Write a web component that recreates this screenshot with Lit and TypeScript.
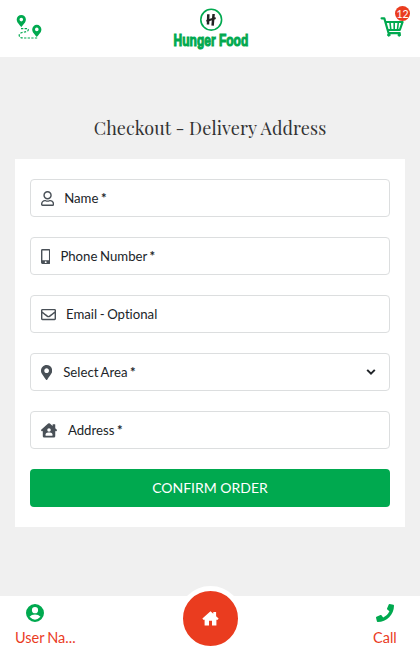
import { LitElement, html, css, svg } from "lit";
import { customElement } from "lit/decorators.js";

const userIcon = svg`<path d="M313.6 304c-28.7 0-42.5 16-89.6 16-47.1 0-60.8-16-89.6-16C60.2 304 0 364.2 0 438.4V464c0 26.5 21.5 48 48 48h352c26.5 0 48-21.5 48-48v-25.6c0-74.2-60.2-134.4-134.4-134.4zM400 464H48v-25.6c0-47.6 38.8-86.4 86.4-86.4 14.6 0 38.3 16 89.6 16 51.7 0 74.9-16 89.6-16 47.6 0 86.4 38.8 86.4 86.4V464zM224 288c79.5 0 144-64.5 144-144S303.5 0 224 0 80 64.5 80 144s64.5 144 144 144zm0-240c52.9 0 96 43.1 96 96s-43.1 96-96 96-96-43.1-96-96 43.1-96 96-96z"/>`;
const mobileIcon = svg`<path fill-rule="evenodd" d="M48 0h224a48 48 0 0 1 48 48v416a48 48 0 0 1-48 48H48a48 48 0 0 1-48-48V48A48 48 0 0 1 48 0zM48 48v336h224V48zM160 416a32 32 0 1 0 0 64 32 32 0 0 0 0-64z"/>`;
const mailIcon = svg`<path fill-rule="evenodd" d="M464 64H48C21.5 64 0 85.500 0 112v288c0 26.500 21.500 48 48 48h416c26.500 0 48-21.500 48-48V112c0-26.500-21.500-48-48-48zm0 48v40.800c-22.400 18.300-58.200 46.700-134.600 106.500-16.800 13.200-50.200 45.100-73.400 44.700-23.200.400-56.600-31.500-73.400-44.700C106.200 199.500 70.400 171.100 48 152.800V112h416zM48 400V214.400c22.900 18.300 55.400 43.900 104.900 82.600 21.900 17.200 60.100 55.200 103.100 55 42.700.200 80.500-37.200 103.100-54.900 49.500-38.800 82-64.400 104.900-82.700V400H48z"/>`;
const pinIcon = svg`<path d="M172.268 501.67C26.97 291.031 0 269.413 0 192 0 85.961 85.961 0 192 0s192 85.961 192 192c0 77.413-26.97 99.031-172.268 309.67-9.535 13.774-29.93 13.773-39.464 0zM192 272c44.183 0 80-35.817 80-80s-35.817-80-80-80-80 35.817-80 80 35.817 80 80 80z"/>`;
const houseUserIcon = svg`<path transform="translate(0 8) scale(.95)" fill-rule="evenodd" d="M570 236 512 184V48a16 16 0 0 0-16-16h-64a16 16 0 0 0-16 16v51l-96-86a48 48 0 0 0-64 0L6 236a18 18 0 0 0-1 25l20 23a18 18 0 0 0 25 1l14-12v191a48 48 0 0 0 48 48h352a48 48 0 0 0 48-48V273l14 12a18 18 0 0 0 25-1l20-23a18 18 0 0 0-1-25zM288 176a64 64 0 1 1 0 128 64 64 0 0 1 0-128zM400 448H176a16 16 0 0 1-16-16 96 96 0 0 1 96-96h64a96 96 0 0 1 96 96 16 16 0 0 1-16 16z"/>`;

const fields = [
  { icon: userIcon, w: 448, label: "Name", mark: true },
  { icon: mobileIcon, w: 320, label: "Phone Number", mark: true },
  { icon: mailIcon, w: 512, label: "Email - Optional" },
  { icon: pinIcon, w: 384, label: "Select Area", mark: true, select: true },
  { icon: houseUserIcon, w: 576, label: "Address", mark: true },
];

@customElement("app-root")
export class AppRoot extends LitElement {
  static styles = css`
    :host {
      display: flex;
      flex-direction: column;
      height: 654px;
      background: #f0f0f0;
      font-family: Lato, sans-serif;
      font-size: 14px;
      color: #212529;
      font-variant-ligatures: none;
    }
    * { box-sizing: border-box; }
    svg { display: block; flex: none; }
    .top {
      height: 57px;
      background: #fff;
      display: grid;
      grid-template-columns: 1fr auto 1fr;
      align-items: start;
      padding: 0 9px 0 15px;
    }
    .route { margin-top: 14px; }
    .logo { margin: 6px 0 0 -6px; }
    .cart { justify-self: end; margin-top: 5px; position: relative; }
    .cart svg { margin: 11px 7px 0 0; }
    .badge {
      position: absolute;
      top: 1px;
      right: 1px;
      width: 15px;
      height: 15px;
      border-radius: 50%;
      background: #ea3c1f;
      color: #fff;
      font-size: 10.5px;
      line-height: 16px;
      text-align: center;
    }
    main { flex: 1; padding: 57px 15px 0; }
    h1 {
      margin: 0;
      height: 45px;
      line-height: 28px;
      font-family: "Playfair Display", "Liberation Serif", serif;
      font-size: 18px;
      font-weight: 400;
      text-align: center;
      white-space: nowrap;
      letter-spacing: 0.08px;
      color: #333;
    }
    .card {
      background: #fff;
      padding: 20px 15px;
      display: flex;
      flex-direction: column;
      gap: 20px;
    }
    .field {
      height: 38px;
      border: 1px solid #dcdedf;
      border-radius: 4px;
      padding: 0 13px 0 10px;
      display: flex;
      align-items: center;
      gap: 10px;
    }
    .field svg { fill: #495057; }
    .label { flex: 1; font-size: 13.2px; word-spacing: -0.8px; }
    .mark { font-weight: 700; }
    .pick { margin-left: 1px; }
    .submit {
      height: 38px;
      border: 0;
      border-radius: 4px;
      background: #00a94f;
      color: #fff;
      font: 14px Lato, sans-serif;
      padding: 0 0 2px;
    }
    .bottom {
      height: 58px;
      background: #fff;
      display: flex;
      justify-content: space-between;
      padding: 0 15px;
      position: relative;
    }
    .tab { width: 60px; color: #ea3c1f; font-size: 14.5px; word-spacing: -0.7px; }
    .tab svg { margin: 8px 0 0 11px; fill: #00a94f; }
    .tab span { display: block; line-height: 18px; margin-top: 7px; white-space: nowrap; }
    .tab.call { width: 32px; }
    .call svg { margin-left: 3px; }
    .home {
      position: absolute;
      left: 178px;
      top: -10px;
      width: 65px;
      height: 65px;
      border: 5px solid #fff;
      border-radius: 50%;
      background: #ea3c1f;
      display: grid;
      place-items: center;
    }
  `;

  render() {
    return html`
      <header class="top">
        <svg class="route" width="28" height="27" viewBox="0 0 28 27">
          <g fill="#00a94f" fill-rule="evenodd">
            <path d="M6.300 1a4.600 4.600 0 0 1 4.600 4.600C10.900 8.600 7.800 11 6.300 13.200 4.800 11 1.700 8.600 1.700 5.600A4.600 4.600 0 0 1 6.300 1zm0 2.800a1.800 1.800 0 1 0 0 3.600 1.800 1.800 0 0 0 0-3.600z"/>
            <path d="M21.800 10.800a4.600 4.600 0 0 1 4.600 4.600c0 3-3.100 5.400-4.600 7.600-1.500-2.200-4.600-4.600-4.600-7.600a4.600 4.600 0 0 1 4.600-4.600zm0 2.800a1.800 1.800 0 1 0 0 3.600 1.800 1.800 0 0 0 0-3.600z"/>
          </g>
          <path d="M6 14.600h5.500q2.500.3 1.500 2.100c-1.200 1.700-8.500 1-8.800 4.400-.1 2.200 2 2.900 4.300 2.900H23" fill="none" stroke="#00a94f" stroke-width="1.200" stroke-dasharray="2.300 1.300"/>
        </svg>
        <svg class="logo" width="78" height="44" viewBox="0 0 78 44">
          <circle cx="40.200" cy="13.700" r="10.400" fill="none" stroke="#00a94f" stroke-width="1.600"/>
          <path d="M37.300 8.200 37 18.500M42.600 8 41.600 19.600" fill="none" stroke="#222" stroke-width="2.500"/>
          <path d="M35.500 15 44.600 12" fill="none" stroke="#222" stroke-width="2"/>
          <text transform="translate(2.600 39.700) scale(1 1.380)" font-family="Liberation Sans, sans-serif" font-size="12" font-weight="700" fill="#00a94f" stroke="#00a94f" stroke-width=".8">Hunger Food</text>
        </svg>
        <div class="cart">
          <svg width="24" height="22" viewBox="0 0 24 22" fill="none" stroke="#00a94f" stroke-width="2.200" stroke-linecap="round" stroke-linejoin="round">
            <path d="M1.600 2.300H4.300L8.600 17.200H19.800M5.600 6H22.600L19.800 14H7.700"/>
            <path d="M10 6.500l.8 7M14.200 6.500V14M18.300 6.500l-.8 7" stroke-width="1.600"/>
            <circle cx="8.800" cy="19" r="1.200" fill="#00a94f" stroke-width="1"/>
            <circle cx="19.200" cy="19" r="1.200" fill="#00a94f" stroke-width="1"/>
          </svg>
          <span class="badge">12</span>
        </div>
      </header>
      <main>
        <h1>Checkout - Delivery Address</h1>
        <section class="card">
          ${fields.map(
            (f) => html`<div class="field">
              <svg width=${(f.w / 512) * 15} height="15" viewBox="0 0 ${f.w} 512">${f.icon}</svg>
              <span class="label ${f.select ? "pick" : ""}">${f.label}${f.mark ? html` <span class="mark">*</span>` : null}</span>
              ${f.select
                ? html`<svg width="10" height="8" viewBox="0 0 10 8"><path d="M1.200 1.900 5 5.700l3.800-3.800" fill="none" stroke="#212529" stroke-width="2"/></svg>`
                : null}
            </div>`
          )}
          <button class="submit">CONFIRM ORDER</button>
        </section>
      </main>
      <nav class="bottom">
        <div class="tab">
          <svg width="18" height="18" viewBox="0 0 18 18"><path fill-rule="evenodd" d="M9 0a9 9 0 1 1 0 18A9 9 0 0 1 9 0zm0 3.100a3.100 3.100 0 1 0 0 6.200 3.100 3.100 0 0 0 0-6.200zM3.500 12.800Q9 18.500 14.500 12.800 12.500 10.600 9 10.600T3.500 12.800z"/></svg>
          <span>User Na...</span>
        </div>
        <div class="home">
          <svg width="17" height="15" viewBox="0 0 17 15"><path fill="#fff" d="M8.500.3 11.300 2.800V1h2.800v4.300L16.600 7.600l-.8 1.100h-1.400v5.700H10V9.700H7v4.700H2.600V8.700H1.200L.4 7.600z"/></svg>
        </div>
        <div class="tab call">
          <svg width="18" height="18" viewBox="0 0 512 512"><path d="M493.400 24.600l-104-24c-11.300-2.600-22.900 3.300-27.500 13.900l-48 112c-4.200 9.800-1.400 21.300 6.900 28l60.600 49.600c-36 76.700-98.900 140.500-177.200 177.200l-49.600-60.600c-6.800-8.300-18.200-11.100-28-6.900l-112 48C3.900 366.500-2 378.100.6 389.400l24 104C27.100 504.200 36.700 512 48 512c256.100 0 464-207.500 464-464 0-11.200-7.700-20.900-18.600-23.400z"/></svg>
          <span>Call</span>
        </div>
      </nav>
    `;
  }
}
